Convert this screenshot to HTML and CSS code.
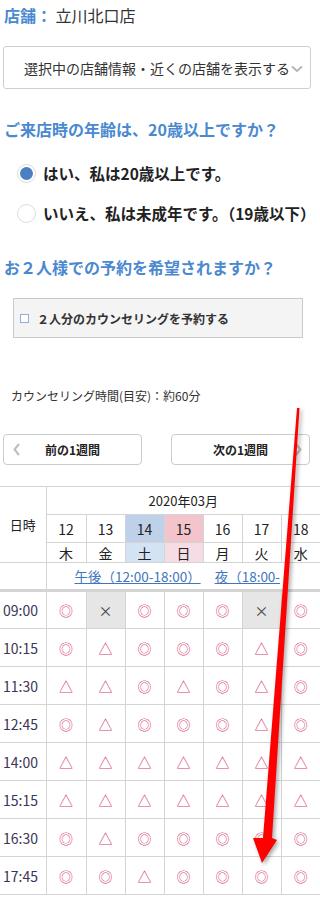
FILE: index.html
```html
<!DOCTYPE html>
<html lang="ja">
<head>
<meta charset="utf-8">
<title>予約</title>
<link rel="stylesheet" href="styles.css">
</head>
<body>
<div class="page">
  <p class="store"><span class="store-label">店舗：</span> 立川北口店</p>

  <div class="select">
    <span class="select-text">選択中の店舗情報・近くの店舗を表示する</span>
    <svg class="chev-down" viewBox="0 0 12 8" width="12" height="8"><polyline points="1,1.5 6,6 11,1.5" fill="none" stroke="#b5b5b5" stroke-width="2"/></svg>
  </div>

  <h2 class="q">ご来店時の年齢は、20歳以上ですか？</h2>
  <div class="radio first"><span class="dot on"></span>はい、私は20歳以上です。</div>
  <div class="radio"><span class="dot"></span>いいえ、私は未成年です。（19歳以下）</div>

  <h2 class="q q2">お２人様での予約を希望されますか？</h2>
  <div class="pair"><span class="box"></span>２人分のカウンセリングを予約する</div>

  <p class="duration">カウンセリング時間(目安)：約60分</p>

  <div class="weeks">
    <div class="wbtn prev">
      <svg class="chev-side" viewBox="0 0 7 13" width="7" height="13"><polyline points="6,1 1.5,6.5 6,12" fill="none" stroke="#bdbdbd" stroke-width="2"/></svg>
      <span class="wlabel">前の1週間</span>
      <span></span>
    </div>
    <div class="wbtn next">
      <span></span>
      <span class="wlabel">次の1週間</span>
      <svg class="chev-side" viewBox="0 0 7 13" width="7" height="13"><polyline points="1,1 5.5,6.5 1,12" fill="none" stroke="#bdbdbd" stroke-width="2"/></svg>
    </div>
  </div>

  <div class="cal-wrap">
    <table class="cal">
      <colgroup>
        <col class="c-time"><col class="c-day1"><col class="c-day"><col class="c-day"><col class="c-day"><col class="c-day"><col class="c-day"><col class="c-day">
      </colgroup>
      <thead>
        <tr class="r-month"><th rowspan="3" class="hd-time">日時</th><th colspan="7" class="month">2020年03月</th></tr>
        <tr class="r-date">
          <th>12</th><th>13</th><th class="sat">14</th><th class="sun">15</th><th>16</th><th>17</th><th>18</th>
        </tr>
        <tr class="r-wd">
          <th>木</th><th>金</th><th class="sat-l">土</th><th class="sun-l">日</th><th>月</th><th>火</th><th>水</th>
        </tr>
        <tr class="r-period">
          <th class="blank"></th>
          <th colspan="7" class="periods"><a href="#">午後（12:00-18:00）</a><a href="#">夜（18:00-</a></th>
        </tr>
      </thead>
      <tbody>
        <tr><td class="time">09:00</td><td class="ok">◎</td><td class="ng">×</td><td class="ok">◎</td><td class="ok">◎</td><td class="ok">◎</td><td class="ng">×</td><td class="ok">◎</td></tr>
        <tr><td class="time">10:15</td><td class="ok">◎</td><td class="few">△</td><td class="ok">◎</td><td class="ok">◎</td><td class="ok">◎</td><td class="few">△</td><td class="ok">◎</td></tr>
        <tr><td class="time">11:30</td><td class="few">△</td><td class="few">△</td><td class="ok">◎</td><td class="few">△</td><td class="ok">◎</td><td class="few">△</td><td class="ok">◎</td></tr>
        <tr><td class="time">12:45</td><td class="ok">◎</td><td class="few">△</td><td class="ok">◎</td><td class="ok">◎</td><td class="ok">◎</td><td class="few">△</td><td class="ok">◎</td></tr>
        <tr><td class="time">14:00</td><td class="few">△</td><td class="few">△</td><td class="few">△</td><td class="few">△</td><td class="few">△</td><td class="few">△</td><td class="few">△</td></tr>
        <tr><td class="time">15:15</td><td class="few">△</td><td class="few">△</td><td class="few">△</td><td class="few">△</td><td class="few">△</td><td class="few">△</td><td class="few">△</td></tr>
        <tr><td class="time">16:30</td><td class="ok">◎</td><td class="few">△</td><td class="ok">◎</td><td class="ok">◎</td><td class="ok">◎</td><td class="ok">◎</td><td class="ok">◎</td></tr>
        <tr><td class="time">17:45</td><td class="ok">◎</td><td class="ok">◎</td><td class="few">△</td><td class="ok">◎</td><td class="ok">◎</td><td class="ok">◎</td><td class="ok">◎</td></tr>
      </tbody>
    </table>
  </div>

  <svg class="annot" viewBox="0 0 320 898" width="320" height="898">
    <polygon points="297,408 299.5,408 272,838 277,840 262,863 253,838 263,838" fill="#ff0000"/>
  </svg>
</div>
</body>
</html>
```

FILE: styles.css
```css
* { box-sizing: border-box; }

body {
  margin: 0;
  background: #fff;
  color: #333;
  font-family: "Noto Sans CJK JP", "Noto Sans", sans-serif;
}

.page {
  position: relative;
  width: 320px;
  height: 898px;
  overflow: hidden;
}

.store {
  margin: 0;
  padding-left: 4px;
  height: 30px;
  line-height: 30px;
  font-size: 16px;
  color: #333;
}

.store-label {
  color: #4a89cf;
  font-weight: bold;
}

.select {
  margin: 16px 9px 0 3px;
  height: 43px;
  border: 1px solid #cfcfcf;
  border-radius: 3px;
  display: flex;
  align-items: center;
  padding-left: 20px;
  font-size: 14px;
  color: #333;
  white-space: nowrap;
  overflow: hidden;
}

.chev-down {
  flex: none;
  margin-left: 1px;
  margin-top: 2px;
}

.q {
  margin: 25px 0 0;
  padding-left: 4px;
  height: 30px;
  line-height: 30px;
  font-size: 16px;
  font-weight: bold;
  color: #4a89cf;
  white-space: nowrap;
}

.q2 { margin-top: 24px; }

.radio {
  display: flex;
  align-items: center;
  gap: 7px;
  height: 30px;
  padding-left: 17px;
  font-size: 15.5px;
  font-weight: bold;
  color: #222;
  white-space: nowrap;
}

.radio.first { margin-top: 14px; }
.radio + .radio { margin-top: 10px; }

.dot {
  flex: none;
  width: 19px;
  height: 19px;
  border-radius: 50%;
  border: 1px solid #dcdcdc;
  background: #fff;
  display: flex;
  align-items: center;
  justify-content: center;
}

.dot.on::after {
  content: "";
  width: 13px;
  height: 13px;
  border-radius: 50%;
  background: #4a80c1;
}

.pair {
  margin: 16px 17px 0 13px;
  height: 40px;
  background: #f4f4f4;
  border: 1px solid #c9c9c9;
  display: flex;
  align-items: center;
  gap: 8px;
  padding-left: 6px;
  font-size: 12px;
  font-weight: bold;
  color: #333;
  white-space: nowrap;
}

.box {
  flex: none;
  width: 9px;
  height: 9px;
  border: 1px solid #8eb0da;
  background: #fff;
}

.duration {
  margin: 48px 0 0;
  padding-left: 11px;
  font-size: 12px;
  line-height: 20px;
  color: #333;
}

.weeks {
  display: flex;
  justify-content: space-between;
  margin: 28px 10px 0 3px;
}

.wbtn {
  width: 139px;
  height: 31px;
  border: 1px solid #cccccc;
  border-radius: 4px;
  display: grid;
  grid-template-columns: 24px 1fr 24px;
  align-items: center;
  font-size: 12px;
  font-weight: bold;
  color: #222;
}

.wlabel { text-align: center; }

.prev .chev-side { margin-left: 9px; }
.next .chev-side { justify-self: end; margin-right: 7px; }

.cal-wrap { margin-top: 21px; }

.cal {
  width: 320px;
  border-collapse: collapse;
  table-layout: fixed;
  color: #222;
}

.c-time { width: 46px; }
.c-day1 { width: 40px; }
.c-day { width: 39px; }

.cal th,
.cal td {
  border: 1px solid #d4d4d4;
  padding: 0;
  text-align: center;
  font-weight: normal;
}

.cal tr > :first-child { border-left: none; }
.cal tr > :last-child { border-right: none; }

.r-month th { height: 28px; font-size: 13px; }
.hd-time { font-size: 13px; vertical-align: middle; }
.r-date th { height: 28px; font-size: 14px; }
.r-wd th { height: 20px; font-size: 14px; line-height: 18px; }
.r-period th { height: 28px; border-bottom: 3px solid #d4d4d4; }

.cal th.blank { border-top: none; }

.sat { background: #bed1e9; }
.sun { background: #f3c4cc; }
.sat-l { background: #d4e3f3; }
.sun-l { background: #f6dce5; }

.periods {
  text-align: left !important;
  padding-left: 28px !important;
  white-space: nowrap;
  overflow: hidden;
  font-size: 13.5px;
}

.periods a {
  color: #3f76bd;
  text-decoration: underline;
  margin-right: 14px;
}

.cal td { height: 38px; font-size: 14px; }

.cal td.time {
  text-align: left;
  padding-left: 3px;
  color: #3a3556;
}

.ok { color: #d6457a; }
.few { color: #d8406e; }
.ng { color: #444; background: #e6e6e6; }

.annot {
  position: absolute;
  left: 0;
  top: 0;
  pointer-events: none;
  filter: drop-shadow(2px 2px 2px rgba(0, 0, 0, 0.35));
}
```
